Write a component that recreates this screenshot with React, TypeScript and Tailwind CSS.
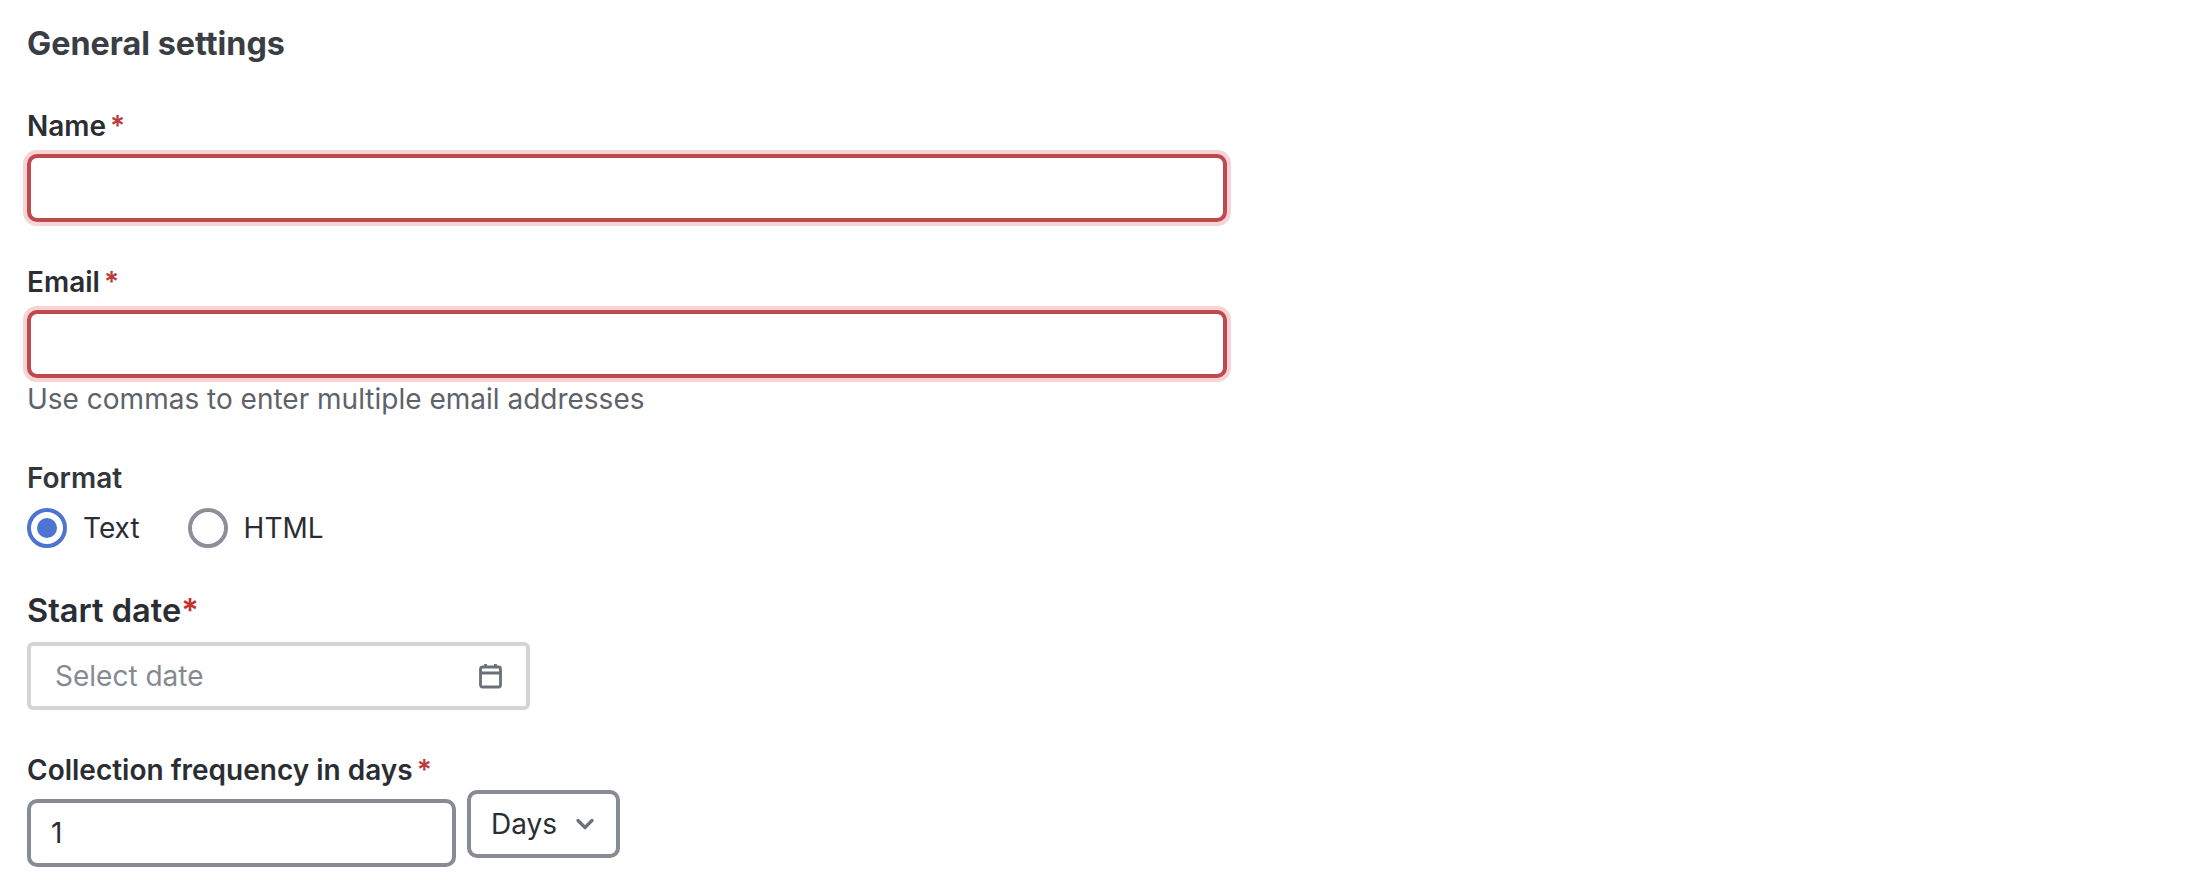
import { ChevronDown } from "lucide-react";

function Required({ className = "ml-[4px]" }: { className?: string }) {
  return <span className={`text-[#b83c3f] ${className}`}>*</span>;
}

function FieldLabel({ text }: { text: string }) {
  return (
    <label className="block h-[28px] text-[28px] leading-[28px] font-semibold text-[#2a2e34]">
      {text}
      <Required />
    </label>
  );
}

function ErrorInput() {
  return (
    <input
      type="text"
      className="block h-[68px] w-[1200px] rounded-[10px] border-[4px] border-[#bf4a4d] bg-white shadow-[0_0_0_4px_#f6d3d4] outline-none"
    />
  );
}

function Radio({ label, checked }: { label: string; checked?: boolean }) {
  return (
    <div className="flex items-center gap-[16px]">
      <span
        className={`flex h-[40px] w-[40px] items-center justify-center rounded-full border-[4px] bg-white ${
          checked ? "border-[#4c74d0]" : "border-[#8b8f98]"
        }`}
      >
        {checked && <span className="h-[20px] w-[20px] rounded-full bg-[#4c74d0]" />}
      </span>
      <span className="text-[28px] leading-[40px] text-[#2a2e34]">{label}</span>
    </div>
  );
}

function CalendarIcon() {
  return (
    <svg width="28" height="28" viewBox="0 0 28 28" fill="none" stroke="#6b7079" strokeWidth="2.8">
      <rect x="4.5" y="5" width="20" height="20" rx="2" />
      <path d="M4.5 11h20M9.5 2v4M19.5 2v4" />
    </svg>
  );
}

export default function App() {
  return (
    <div className="min-h-[895px] w-[2202px] bg-white pl-[27px] pt-[26px] font-['Inter','Liberation_Sans',sans-serif]">
      <h2 className="text-[32.3px] leading-[36px] font-bold text-[#3a3e44]">General settings</h2>

      <div className="mt-[50px]">
        <FieldLabel text="Name" />
        <div className="mt-[14px]">
          <ErrorInput />
        </div>
      </div>

      <div className="mt-[46px]">
        <FieldLabel text="Email" />
        <div className="mt-[14px]">
          <ErrorInput />
        </div>
        <p className="mt-[6px] text-[28px] leading-[30px] text-[#5d626b]">
          Use commas to enter multiple email addresses
        </p>
      </div>

      <div className="mt-[50px]">
        <label className="block h-[28px] text-[28px] leading-[28px] font-semibold text-[#33373d]">Format</label>
        <div className="mt-[16px] flex gap-[48px]">
          <Radio label="Text" checked />
          <Radio label="HTML" />
        </div>
      </div>

      <div className="mt-[44px]">
        <label className="block h-[36px] text-[32.6px] leading-[36px] font-semibold text-[#2a2e34]">
          Start date
          <Required className="text-[#c8302c]" />
        </label>
        <div className="mt-[14px] flex h-[68px] w-[503px] items-center justify-between rounded-[6px] border-[4px] border-[#d2d4d8] pl-[24px] pr-[22px]">
          <span className="text-[28px] text-[#858a92]">Select date</span>
          <CalendarIcon />
        </div>
      </div>

      <div className="mt-[46px]">
        <FieldLabel text="Collection frequency in days" />
        <div className="flex items-start gap-[11px]">
          <input
            type="text"
            defaultValue="1"
            className="mt-[15px] block h-[68px] w-[429px] rounded-[10px] border-[4px] border-[#878c94] bg-white pl-[20px] text-[28px] text-[#2a2e34] outline-none"
          />
          <div className="mt-[6px] flex h-[68px] w-[153px] items-center gap-[14px] rounded-[10px] border-[4px] border-[#878c94] pl-[20px] text-[28px] text-[#2a2e34]">
            Days
            <ChevronDown size={28} strokeWidth={2.8} className="shrink-0 text-[#6b7079]" />
          </div>
        </div>
      </div>
    </div>
  );
}
